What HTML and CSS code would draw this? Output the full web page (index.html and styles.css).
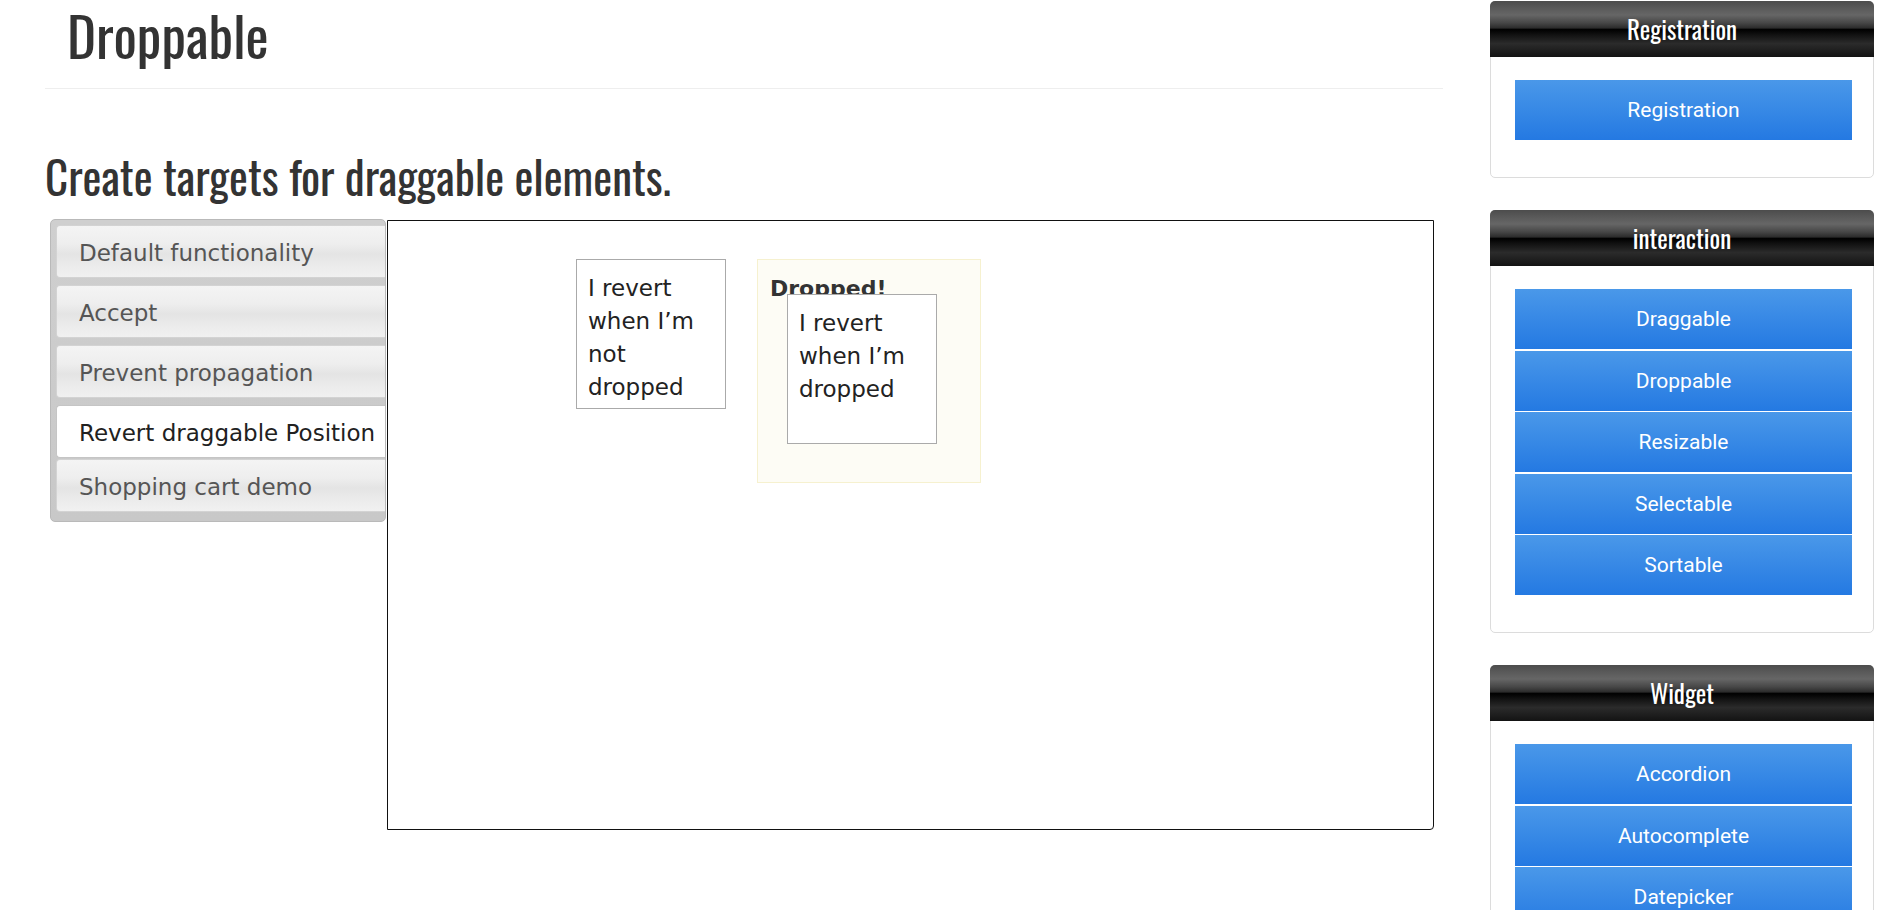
FILE: index.html
```html
<!DOCTYPE html>
<html lang="en">
<head>
<meta charset="utf-8">
<title>Droppable</title>
<link rel="stylesheet" href="styles.css">
</head>
<body>
<div class="page">
  <main class="main">
    <h1 class="page-title">Droppable</h1>
    <hr class="divider">
    <h2 class="subtitle">Create targets for draggable elements.</h2>
    <div class="demo">
      <ul class="tabs">
        <li class="tab">Default functionality</li>
        <li class="tab">Accept</li>
        <li class="tab">Prevent propagation</li>
        <li class="tab tab-active">Revert draggable Position</li>
        <li class="tab">Shopping cart demo</li>
      </ul>
      <div class="frame">
        <div class="drag-box">I revert when I’m not dropped</div>
        <div class="drop-box">
          <p class="drop-label">Dropped!</p>
          <div class="drag-box drag-dropped">I revert when I’m dropped</div>
        </div>
      </div>
    </div>
  </main>
  <aside class="sidebar">
    <section class="card">
      <h3 class="card-head">Registration</h3>
      <div class="card-body">
        <a class="side-btn">Registration</a>
      </div>
    </section>
    <section class="card">
      <h3 class="card-head">interaction</h3>
      <div class="card-body">
        <a class="side-btn">Draggable</a>
        <a class="side-btn">Droppable</a>
        <a class="side-btn">Resizable</a>
        <a class="side-btn">Selectable</a>
        <a class="side-btn">Sortable</a>
      </div>
    </section>
    <section class="card">
      <h3 class="card-head">Widget</h3>
      <div class="card-body">
        <a class="side-btn">Accordion</a>
        <a class="side-btn">Autocomplete</a>
        <a class="side-btn">Datepicker</a>
        <a class="side-btn">Menu</a>
        <a class="side-btn">Slider</a>
        <a class="side-btn">Tabs</a>
        <a class="side-btn">Tooltip</a>
      </div>
    </section>
  </aside>
</div>
</body>
</html>
```

FILE: styles.css
```css
html, body {
  margin: 0;
  padding: 0;
  background: #fff;
}

body {
  font-family: "DejaVu Sans", Verdana, sans-serif;
  color: #333;
  overflow: hidden;
}

.page {
  display: flex;
  align-items: flex-start;
}

.main {
  margin-left: 45px;
  width: 1398px;
}

.page-title,
.subtitle,
.card-head {
  font-family: "Oswald", "Liberation Sans Narrow", "DejaVu Sans Condensed", "Roboto Condensed", sans-serif;
  font-stretch: condensed;
  font-weight: normal;
}

.page-title {
  margin: 2px 0 0 0;
  padding-left: 22px;
  font-size: 55px;
  line-height: 64px;
  color: #333;
}

.divider {
  margin: 22px 0 0 0;
  border: 0;
  border-top: 1px solid #eee;
  height: 0;
}

.subtitle {
  margin: 61px 0 0 0;
  font-size: 45px;
  line-height: 52px;
  color: #333;
}

.demo {
  display: flex;
  align-items: flex-start;
  margin-top: 17px;
}

.tabs {
  list-style: none;
  margin: 0 0 0 5px;
  padding: 5px 0 9px 5px;
  width: 329px;
  border: 1px solid #b9b9b9;
  border-radius: 5px;
  background: linear-gradient(#cfcfcf, #c8c8c8);
}

.tab {
  box-sizing: border-box;
  height: 53px;
  margin-bottom: 7px;
  padding: 3px 0 0 22px;
  line-height: 48px;
  font-size: 23px;
  color: #555;
  white-space: nowrap;
  border: 1px solid #d3d3d3;
  border-right: 0;
  border-radius: 4px 0 0 4px;
  background: linear-gradient(#f4f4f4 0%, #eeeeee 35%, #e4e4e4 55%, #ececec 80%, #f1f1f1 100%);
}

.tab:last-child {
  margin-bottom: 0;
}

.tab-active {
  margin-bottom: 1px;
  background: #fff;
  color: #212121;
  border-color: #c5c5c5;
}

.frame {
  box-sizing: border-box;
  width: 1047px;
  height: 610px;
  margin: 1px 0 0 1px;
  padding: 38px 0 0 188px;
  border: 1px solid #111;
  border-radius: 0 0 4px 0;
  display: flex;
  align-items: flex-start;
  gap: 31px;
  background: #fff;
}

.drag-box {
  box-sizing: border-box;
  width: 150px;
  height: 150px;
  padding: 12px 11px;
  border: 1px solid #aaa;
  background: #fff;
  color: #222;
  font-size: 23px;
  line-height: 33px;
}

.drop-box {
  position: relative;
  box-sizing: border-box;
  width: 224px;
  height: 224px;
  padding: 12px;
  border: 1px solid #f6f1cf;
  background: #fdfcf5;
}

.drop-label {
  margin: 0;
  font-weight: bold;
  font-size: 22px;
  line-height: 33px;
  color: #333;
}

.drag-dropped {
  position: absolute;
  left: 29px;
  top: 34px;
}

.sidebar {
  margin-left: 47px;
  margin-top: 1px;
  width: 384px;
}

.card {
  border: 1px solid #dcdcdc;
  border-radius: 5px;
  background: #fff;
  margin-bottom: 32px;
}

.card-head {
  margin: -1px -1px 0 -1px;
  height: 56px;
  line-height: 56px;
  text-align: center;
  color: #fff;
  font-size: 25px;
  border-radius: 5px 5px 0 0;
  background: linear-gradient(to bottom, #4c4c4c 0%, #595959 12%, #666666 25%, #474747 39%, #2c2c2c 48%, #000000 51%, #111111 60%, #2b2b2b 76%, #1c1c1c 91%, #131313 100%);
}

.card-body {
  padding: 23px 21px 37px 24px;
  display: flex;
  flex-direction: column;
  gap: 1.5px;
}

.side-btn {
  display: block;
  height: 60px;
  line-height: 60px;
  text-align: center;
  color: #fff;
  font-family: Roboto, "Liberation Sans", sans-serif;
  font-size: 21px;
  background: linear-gradient(#4a98e9, #2479e2);
}
```
